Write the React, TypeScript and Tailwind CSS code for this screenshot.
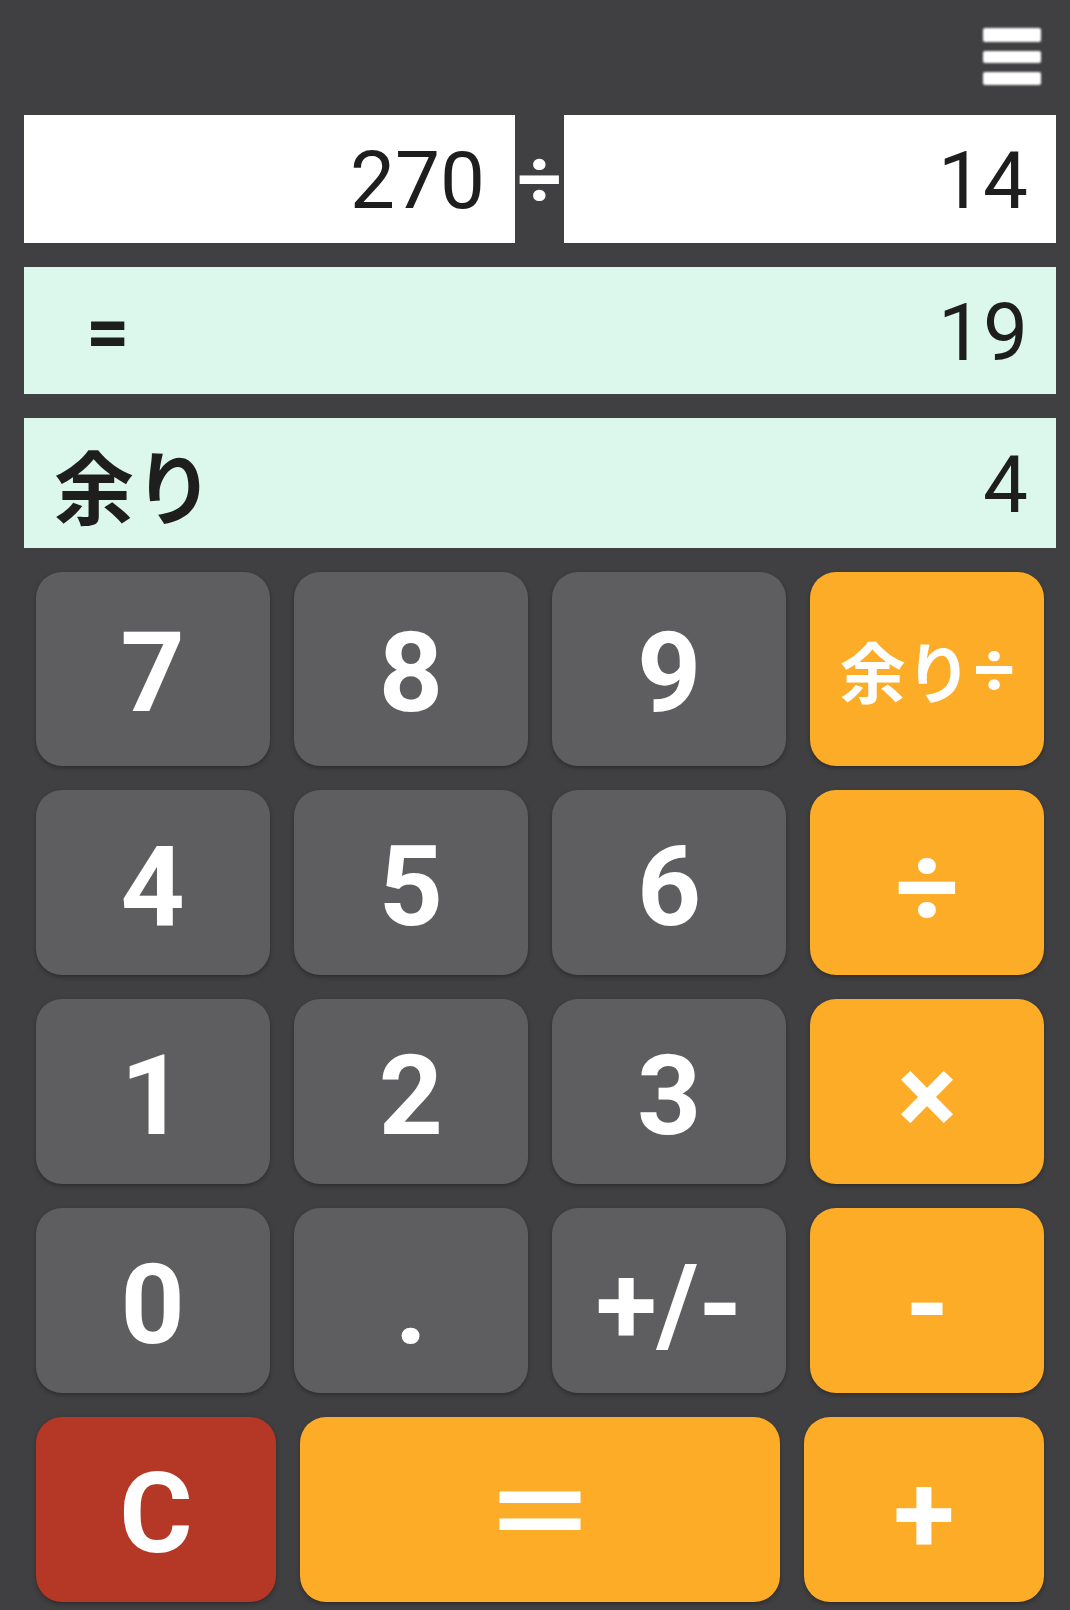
import React from "react";

const roboto = { fontFamily: "Roboto, 'Noto Sans', sans-serif" };

function Key({
  label,
  color,
  cjk,
  className = "",
}: {
  label: React.ReactNode;
  color: "gray" | "orange" | "red";
  cjk?: boolean;
  className?: string;
}) {
  const bg =
    color === "gray"
      ? "bg-[#5e5d5f]"
      : color === "orange"
      ? "bg-[#fdac28]"
      : "bg-[#b43825]";
  return (
    <div
      className={`${bg} ${className} rounded-[26px] shadow-[0_2px_4px_rgba(0,0,0,0.3)] flex items-center justify-center text-white leading-none ${
        cjk ? "" : "pt-[8px]"
      }`}
    >
      {label}
    </div>
  );
}

const digit = "text-[112px] font-bold font-['Roboto',sans-serif]";
const cjkFont = "font-['Noto_Sans_CJK_JP','Noto_Sans',sans-serif]";

export default function App() {
  return (
    <div className="w-[1070px] h-[1610px] bg-[#403f41] overflow-hidden" style={roboto}>
      {/* header */}
      <div className="h-[115px] flex justify-end items-start pt-[28px] pr-[29px]">
        <div className="flex flex-col gap-[9px] w-[58px]">
          <div className="h-[14px] bg-white rounded-[2px] blur-[1px]" />
          <div className="h-[12px] bg-white rounded-[2px] blur-[1px]" />
          <div className="h-[13px] bg-white rounded-[2px] blur-[1px]" />
        </div>
      </div>

      {/* displays */}
      <div className="pl-[24px] pr-[14px] flex flex-col gap-[24px]">
        <div className="h-[128px] flex">
          <div className="w-[491px] bg-white flex items-center justify-end pr-[30px] pt-[4px] text-[80px] text-[#1e1e1e] leading-none font-['Roboto',sans-serif]">
            270
          </div>
          <div className="w-[49px] flex items-center justify-center pt-[2px] text-white text-[78px] font-bold leading-none font-['Roboto',sans-serif]">
            ÷
          </div>
          <div className="flex-1 bg-white flex items-center justify-end pr-[28px] pt-[4px] text-[80px] text-[#1e1e1e] leading-none font-['Roboto',sans-serif]">
            14
          </div>
        </div>
        <div className="h-[127px] bg-[#dcf8ec] flex items-center justify-between pl-[62px] pr-[28px] text-[#1e1e1e] leading-none">
          <span className="text-[76px] font-bold font-['Roboto',sans-serif] pt-[2px]">=</span>
          <span className="text-[80px] font-['Roboto',sans-serif] pt-[4px]">19</span>
        </div>
        <div className="h-[130px] bg-[#dcf8ec] flex items-center justify-between pl-[30px] pr-[28px] text-[#1e1e1e] leading-none">
          <span className={`text-[80px] font-bold ${cjkFont}`}>余り</span>
          <span className="text-[80px] font-['Roboto',sans-serif] pt-[4px]">4</span>
        </div>
      </div>

      {/* keypad */}
      <div className="mt-[24px] pl-[36px] pr-[26px]">
        <div className="grid grid-cols-4 gap-x-[24.67px] gap-y-[24px] grid-rows-[194px_185px_185px_185px]">
          <Key color="gray" label={<span className={digit}>7</span>} />
          <Key color="gray" label={<span className={digit}>8</span>} />
          <Key color="gray" label={<span className={digit}>9</span>} />
          <Key
            color="orange"
            cjk
            label={
              <span className="flex items-center">
                <span className={`text-[66px] font-bold ${cjkFont}`}>余り</span>
                <span className="text-[72px] font-bold font-['Roboto',sans-serif] ml-[2px] pt-[4px]">÷</span>
              </span>
            }
          />
          <Key color="gray" label={<span className={digit}>4</span>} />
          <Key color="gray" label={<span className={digit}>5</span>} />
          <Key color="gray" label={<span className={digit}>6</span>} />
          <Key color="orange" label={<span className={digit}>÷</span>} />
          <Key color="gray" label={<span className={digit}>1</span>} />
          <Key color="gray" label={<span className={digit}>2</span>} />
          <Key color="gray" label={<span className={digit}>3</span>} />
          <Key color="orange" label={<span className={digit}>×</span>} />
          <Key color="gray" label={<span className={digit}>0</span>} />
          <Key color="gray" label={<span className={digit}>.</span>} />
          <Key color="gray" label={<span className={digit}>+/-</span>} />
          <Key color="orange" label={<span className={digit}>-</span>} />
        </div>
        <div className="mt-[24px] h-[185px] flex gap-[24px]">
          <Key color="red" className="flex-1" label={<span className={digit}>C</span>} />
          <Key
            color="orange"
            cjk
            className="flex-[2]"
            label={<span className={`text-[114px] font-bold ${cjkFont} -mt-[8px]`}>＝</span>}
          />
          <Key color="orange" className="flex-1" label={<span className={digit}>+</span>} />
        </div>
      </div>
    </div>
  );
}
